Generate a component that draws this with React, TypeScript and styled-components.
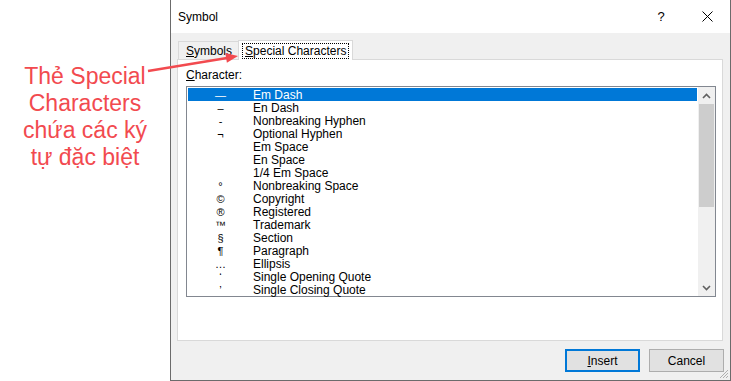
import React from 'react';
import styled, { createGlobalStyle } from 'styled-components';

const GlobalStyle = createGlobalStyle`
  html, body {
    margin: 0;
    padding: 0;
    background: #ffffff;
  }
  body {
    font-family: "Liberation Sans", Arial, sans-serif;
  }
`;

const Page = styled.div`
  position: relative;
  display: flex;
  width: 731px;
  height: 381px;
  overflow: hidden;
  background: #ffffff;
`;

const Note = styled.div`
  width: 170px;
  flex-shrink: 0;
  padding-top: 63px;
  box-sizing: border-box;
  text-align: center;
  color: #f24a4f;
  font-size: 23px;
  line-height: 27px;
`;

const Dialog = styled.div`
  position: relative;
  width: 561px;
  height: 381px;
  box-sizing: border-box;
  display: flex;
  flex-direction: column;
  background: #f0f0f0;
  border-left: 1px solid #6b6b6b;
  border-right: 1px solid #6b6b6b;
  border-bottom: 1px solid #6b6b6b;
  font-size: 12px;
  color: #000;
`;

const TitleBar = styled.div`
  height: 33px;
  flex-shrink: 0;
  display: flex;
  align-items: center;
  background: #ffffff;
`;

const Title = styled.div`
  flex: 1;
  padding-left: 7px;
  font-size: 12px;
`;

const CaptionButton = styled.div`
  width: 46px;
  height: 33px;
  display: flex;
  align-items: center;
  justify-content: center;
  font-size: 13px;
`;

const Body = styled.div`
  flex: 1;
  display: flex;
  flex-direction: column;
  padding: 7px 7px 0 6px;
`;

const TabStrip = styled.div`
  display: flex;
  align-items: flex-end;
  height: 19px;
  padding-left: 1px;
`;

const Tab = styled.div<{ $active?: boolean }>`
  position: relative;
  box-sizing: border-box;
  display: flex;
  align-items: center;
  justify-content: center;
  border: 1px solid #d9d9d9;
  border-bottom: none;
  background: ${p => (p.$active ? '#ffffff' : '#f0f0f0')};
  height: ${p => (p.$active ? '20px' : '18px')};
  margin: ${p => (p.$active ? '0 0 -1px -1px' : '0')};
  padding: ${p => (p.$active ? '0 3px 0 3px' : '1px 6px 0 7px')};
  z-index: ${p => (p.$active ? 1 : 0)};
`;

const Focus = styled.span`
  border: 1px dotted #000;
  padding: 0 2px 0 2px;
  line-height: 14px;
`;

const Key = styled.span`
  text-decoration: underline;
  text-underline-offset: 1px;
`;

const Panel = styled.div`
  height: 282px;
  box-sizing: border-box;
  border: 1px solid #d9d9d9;
  background: #ffffff;
  padding: 8px 6px 0 8px;
  display: flex;
  flex-direction: column;
`;

const Label = styled.div`
  line-height: 15px;
  margin-bottom: 3px;
`;

const ListBox = styled.div`
  height: 211px;
  box-sizing: border-box;
  border: 1px solid #828790;
  display: flex;
`;

const Rows = styled.div`
  flex: 1;
  padding: 1px 1px 0 1px;
`;

const Row = styled.div<{ $selected?: boolean }>`
  display: flex;
  height: 13px;
  line-height: 14px;
  white-space: nowrap;
  background: ${p => (p.$selected ? '#0078d7' : 'transparent')};
  color: ${p => (p.$selected ? '#ffffff' : '#000000')};
`;

const Glyph = styled.span`
  width: 65px;
  text-align: center;
  font-size: 11px;
`;

const Name = styled.span``;

const ScrollBar = styled.div`
  width: 17px;
  background: #f0f0f0;
  display: flex;
  flex-direction: column;
`;

const ScrollArrow = styled.div`
  height: 17px;
  display: flex;
  align-items: center;
  justify-content: center;
`;

const Track = styled.div`
  flex: 1;
  padding: 0 1px;
`;

const Thumb = styled.div`
  height: 103px;
  background: #cdcdcd;
`;

const Footer = styled.div`
  display: flex;
  justify-content: flex-end;
  gap: 9px;
  padding-top: 8px;
  margin-right: -1px;
`;

const Button = styled.div<{ $primary?: boolean }>`
  width: 75px;
  height: 23px;
  box-sizing: border-box;
  display: flex;
  align-items: center;
  justify-content: center;
  background: #e1e1e1;
  border: ${p => (p.$primary ? '2px solid #0078d7' : '1px solid #adadad')};
`;

const Grip = styled.svg`
  position: absolute;
  right: 1px;
  bottom: 1px;
`;

const Arrow = styled.svg`
  position: absolute;
  left: 0;
  top: 0;
  pointer-events: none;
`;

const items: [string, string][] = [
  ['—', 'Em Dash'],
  ['–', 'En Dash'],
  ['-', 'Nonbreaking Hyphen'],
  ['¬', 'Optional Hyphen'],
  ['', 'Em Space'],
  ['', 'En Space'],
  ['', '1/4 Em Space'],
  ['°', 'Nonbreaking Space'],
  ['©', 'Copyright'],
  ['®', 'Registered'],
  ['™', 'Trademark'],
  ['§', 'Section'],
  ['¶', 'Paragraph'],
  ['…', 'Ellipsis'],
  ['‘', 'Single Opening Quote'],
  ['’', 'Single Closing Quote'],
];

const Chevron: React.FC<{ up?: boolean }> = ({ up }) => (
  <svg width="9" height="6" viewBox="0 0 9 6">
    <path
      d={up ? 'M1 5 L4.5 1.5 L8 5' : 'M1 1 L4.5 4.5 L8 1'}
      fill="none"
      stroke="#606060"
      strokeWidth="1.6"
    />
  </svg>
);

const App: React.FC = () => (
  <>
    <GlobalStyle />
    <Page>
      <Note>
        Thẻ Special
        <br />
        Characters
        <br />
        chứa các ký
        <br />
        tự đặc biệt
      </Note>
      <Dialog>
        <TitleBar>
          <Title>Symbol</Title>
          <CaptionButton>?</CaptionButton>
          <CaptionButton>
            <svg width="11" height="11" viewBox="0 0 11 11">
              <path d="M0.5 0.5 L10.5 10.5 M10.5 0.5 L0.5 10.5" stroke="#000" strokeWidth="1" />
            </svg>
          </CaptionButton>
        </TitleBar>
        <Body>
          <TabStrip>
            <Tab>
              <span><Key>S</Key>ymbols</span>
            </Tab>
            <Tab $active>
              <Focus><Key>S</Key>pecial Characters</Focus>
            </Tab>
          </TabStrip>
          <Panel>
            <Label><Key>C</Key>haracter:</Label>
            <ListBox>
              <Rows>
                {items.map(([g, n], i) => (
                  <Row key={n} $selected={i === 0}>
                    <Glyph>{g}</Glyph>
                    <Name>{n}</Name>
                  </Row>
                ))}
              </Rows>
              <ScrollBar>
                <ScrollArrow><Chevron up /></ScrollArrow>
                <Track><Thumb /></Track>
                <ScrollArrow><Chevron /></ScrollArrow>
              </ScrollBar>
            </ListBox>
          </Panel>
          <Footer>
            <Button $primary><span><Key>I</Key>nsert</span></Button>
            <Button>Cancel</Button>
          </Footer>
        </Body>
        <Grip width="10" height="10" viewBox="0 0 10 10">
          <path d="M9 1 L1 9 M9 4 L4 9 M9 7 L7 9" stroke="#b0b0b0" strokeWidth="1" />
        </Grip>
      </Dialog>
      <Arrow width="731" height="381" viewBox="0 0 731 381">
        <line x1="148" y1="71" x2="227" y2="58" stroke="#f24a4f" strokeWidth="2.5" />
        <polygon points="238,56 226.9,62.8 225.3,53" fill="#f24a4f" />
      </Arrow>
    </Page>
  </>
);

export default App;
